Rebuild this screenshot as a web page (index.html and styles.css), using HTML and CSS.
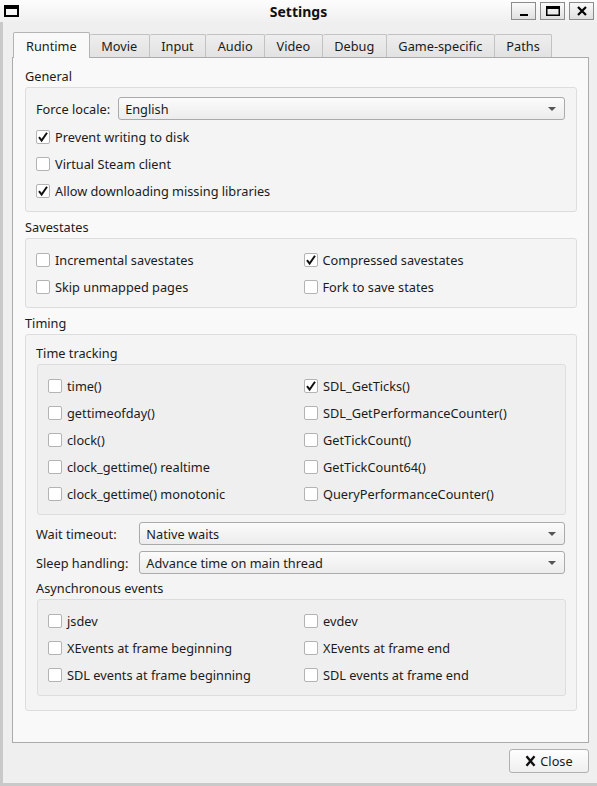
FILE: index.html
```html
<!DOCTYPE HTML>
<html>
<head>
<link rel="stylesheet" href="styles.css">
</head>
<body>
<div class="window">
    <header class="titlebar">
        <span class="app-icon"></span>
        <h1 class="title">Settings</h1>
        <div class="wm-buttons">
            <button class="wm-btn"><svg width="12" height="12" viewBox="0 0 12 12"><rect x="2" y="9" width="8" height="2" fill="#000"/></svg></button>
            <button class="wm-btn"><svg width="16" height="12" viewBox="0 0 16 12"><path d="M1.75 1.75h12.5v8.5H1.75z" fill="none" stroke="#000" stroke-width="1.5"/><rect x="1" y="1" width="14" height="3" fill="#000"/></svg></button>
            <button class="wm-btn"><svg width="10" height="10" viewBox="0 0 10 10"><path d="M1 1L9 9M9 1L1 9" stroke="#000" stroke-width="2.2"/></svg></button>
        </div>
    </header>

    <main class="client">
        <div class="tab-bar">
            <span class="tab active">Runtime</span>
            <span class="tab">Movie</span>
            <span class="tab">Input</span>
            <span class="tab">Audio</span>
            <span class="tab">Video</span>
            <span class="tab">Debug</span>
            <span class="tab">Game-specific</span>
            <span class="tab">Paths</span>
        </div>

        <section class="pane">
            <div class="section-title">General</div>
            <div class="group">
                <div class="field">
                    <span class="field-label">Force locale:</span>
                    <div class="combo">English</div>
                </div>
                <label class="check"><span class="box"><svg width="12" height="12" viewBox="0 0 12 12"><path d="M2 6.2l2.6 3.3L10 1.8" fill="none" stroke="#111" stroke-width="2"/></svg></span>Prevent writing to disk</label>
                <label class="check"><span class="box"></span>Virtual Steam client</label>
                <label class="check"><span class="box"><svg width="12" height="12" viewBox="0 0 12 12"><path d="M2 6.2l2.6 3.3L10 1.8" fill="none" stroke="#111" stroke-width="2"/></svg></span>Allow downloading missing libraries</label>
            </div>

            <div class="section-title">Savestates</div>
            <div class="group">
                <div class="checks">
                    <label class="check"><span class="box"></span>Incremental savestates</label>
                    <label class="check"><span class="box"><svg width="12" height="12" viewBox="0 0 12 12"><path d="M2 6.2l2.6 3.3L10 1.8" fill="none" stroke="#111" stroke-width="2"/></svg></span>Compressed savestates</label>
                    <label class="check"><span class="box"></span>Skip unmapped pages</label>
                    <label class="check"><span class="box"></span>Fork to save states</label>
                </div>
            </div>

            <div class="section-title">Timing</div>
            <div class="group timing">
                <div class="section-title">Time tracking</div>
                <div class="group inner">
                    <div class="checks">
                        <label class="check"><span class="box"></span>time()</label>
                        <label class="check"><span class="box"><svg width="12" height="12" viewBox="0 0 12 12"><path d="M2 6.2l2.6 3.3L10 1.8" fill="none" stroke="#111" stroke-width="2"/></svg></span>SDL_GetTicks()</label>
                        <label class="check"><span class="box"></span>gettimeofday()</label>
                        <label class="check"><span class="box"></span>SDL_GetPerformanceCounter()</label>
                        <label class="check"><span class="box"></span>clock()</label>
                        <label class="check"><span class="box"></span>GetTickCount()</label>
                        <label class="check"><span class="box"></span>clock_gettime() realtime</label>
                        <label class="check"><span class="box"></span>GetTickCount64()</label>
                        <label class="check"><span class="box"></span>clock_gettime() monotonic</label>
                        <label class="check"><span class="box"></span>QueryPerformanceCounter()</label>
                    </div>
                </div>

                <div class="form-grid">
                    <span class="field-label">Wait timeout:</span>
                    <div class="combo">Native waits</div>
                    <span class="field-label">Sleep handling:</span>
                    <div class="combo">Advance time on main thread</div>
                </div>

                <div class="section-title tight">Asynchronous events</div>
                <div class="group inner">
                    <div class="checks">
                        <label class="check"><span class="box"></span>jsdev</label>
                        <label class="check"><span class="box"></span>evdev</label>
                        <label class="check"><span class="box"></span>XEvents at frame beginning</label>
                        <label class="check"><span class="box"></span>XEvents at frame end</label>
                        <label class="check"><span class="box"></span>SDL events at frame beginning</label>
                        <label class="check"><span class="box"></span>SDL events at frame end</label>
                    </div>
                </div>
            </div>
        </section>

        <div class="footer">
            <button class="btn"><svg width="11" height="12" viewBox="0 0 11 12"><path d="M1.5 1.2L9.5 10.8M9.5 1.2L1.5 10.8" stroke="#111" stroke-width="2.4"/></svg>Close</button>
        </div>
    </main>
</div>
</body>
</html>
```

FILE: styles.css
```css
body {
    margin: 0;
    font-family: "Noto Sans", sans-serif;
    font-size: 12.75px;
    color: #1b1b1b;
    background: #efefef;
}

.window {
    height: 786px;
    display: flex;
    flex-direction: column;
}

/* title bar */
.titlebar {
    height: 22px;
    flex: none;
    display: grid;
    grid-template-columns: 1fr auto 1fr;
    align-items: center;
    background: linear-gradient(#fdfdfd, #f0f0f0);
}

.app-icon {
    margin-left: 4px;
    width: 11px;
    height: 6px;
    border: 2px solid #000;
    border-top-width: 4px;
}

.title {
    margin: 0;
    font-size: 14px;
    font-weight: bold;
    color: #111;
}

.wm-buttons {
    display: flex;
    justify-content: flex-end;
    gap: 4px;
    padding-right: 3px;
}

.wm-btn {
    width: 25px;
    height: 18px;
    padding: 0;
    border: 1px solid #8c8c8c;
    background: linear-gradient(#fafafa, #e0e0e0);
    display: flex;
    align-items: center;
    justify-content: center;
}

/* client area */
.client {
    flex: 1;
    display: flex;
    flex-direction: column;
    border-left: 3px solid #c9c9c9;
    border-bottom: 3px solid #c9c9c9;
    padding: 10px 8px 10px 9px;
}

.tab-bar {
    display: flex;
    align-items: flex-end;
    padding-left: 1px;
    position: relative;
    z-index: 1;
}

.tab {
    height: 22px;
    padding: 0 11.5px;
    display: flex;
    align-items: center;
    border: 1px solid #c2c2c2;
    border-left: none;
    border-bottom: none;
    border-radius: 2px 2px 0 0;
    background: linear-gradient(#eeeeee, #e2e2e2);
}

.tab.active {
    height: 25px;
    margin-bottom: -1px;
    padding: 0 12px;
    border-left: 1px solid #b4b4b4;
    border-color: #b4b4b4;
    background: #f9f9f9;
}

.pane {
    flex: 1;
    display: flex;
    flex-direction: column;
    border: 1px solid #ababab;
    background: #f9f9f9;
    padding: 9px 11px 9px 12px;
}

.section-title {
    line-height: 18px;
    margin: 6px 0 2px;
}

.section-title:first-child {
    margin-top: 0;
}

.section-title.tight {
    margin-top: 5px;
}

.group {
    display: flex;
    flex-direction: column;
    gap: 4px;
    padding: 9px 11px 9px 10px;
    border: 1px solid #dddddd;
    border-radius: 3px;
    background: rgba(0, 0, 0, 0.02);
}

.group.timing {
    gap: 0;
    padding-bottom: 14px;
}

.group.inner {
    margin: 0 -1px 0 1px;
}

.field {
    display: flex;
    align-items: center;
    gap: 8px;
    margin-bottom: 1px;
}

.form-grid {
    display: grid;
    grid-template-columns: auto 1fr;
    align-items: center;
    column-gap: 11px;
    row-gap: 6px;
    margin-top: 7px;
}

.combo {
    flex: 1;
    height: 23px;
    box-sizing: border-box;
    display: flex;
    align-items: center;
    justify-content: space-between;
    padding: 0 8px 0 6px;
    border: 1px solid #aaaaaa;
    border-radius: 3px;
    background: linear-gradient(#fbfbfb, #ececec);
}

.combo::after {
    content: "";
    border-left: 4px solid transparent;
    border-right: 4px solid transparent;
    border-top: 4px solid #555;
}

.checks {
    display: grid;
    grid-template-columns: 1fr 1fr;
    column-gap: 6px;
    row-gap: 4px;
}

.check {
    height: 23px;
    display: flex;
    align-items: center;
    gap: 5px;
}

.box {
    width: 14px;
    height: 14px;
    box-sizing: border-box;
    display: flex;
    align-items: center;
    justify-content: center;
    border: 1px solid #b3b3b3;
    border-radius: 2px;
    background: #fff;
}

/* dialog buttons */
.footer {
    display: flex;
    justify-content: flex-end;
    padding-top: 6px;
}

.btn {
    width: 80px;
    height: 24px;
    display: flex;
    align-items: center;
    justify-content: center;
    gap: 4px;
    padding: 0;
    font: inherit;
    color: #1b1b1b;
    border: 1px solid #b0b0b0;
    border-radius: 3px;
    background: linear-gradient(#fefefe, #efefef);
}
```
